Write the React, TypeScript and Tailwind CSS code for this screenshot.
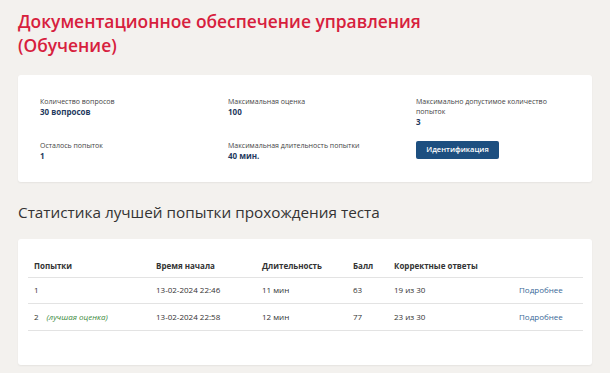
const rows = [
  { n: '1', best: false, start: '13-02-2024 22:46', dur: '11 мин', score: '63', correct: '19 из 30' },
  { n: '2', best: true, start: '13-02-2024 22:58', dur: '12 мин', score: '77', correct: '23 из 30' },
];

function Info({ label, value }: { label: string; value: string }) {
  return (
    <div className="leading-[10px]">
      <div className="text-[7px] text-[#444]">{label}</div>
      <div className="text-[8px] font-bold text-[#1f3a60]">{value}</div>
    </div>
  );
}

export default function App() {
  return (
    <div className="min-h-screen bg-[#f3f1ee] px-[18px] pt-[9px] pb-2 font-['Open_Sans',sans-serif]">
      <h1 className="text-[17.4px] leading-[24px] font-semibold text-[#d7203d]">
        Документационное обеспечение управления
        <br />
        (Обучение)
      </h1>

      <div className="mt-[18px] bg-white rounded-[3px] shadow-[0_1px_2px_rgba(0,0,0,0.06)] px-[22px] pt-[22px] pb-[21px]">
        <div className="grid grid-cols-[188px_188px_1fr] grid-rows-[44px_auto]">
          <Info label="Количество вопросов" value="30 вопросов" />
          <Info label="Максимальная оценка" value="100" />
          <div className="leading-[10px]">
            <div className="text-[7px] text-[#444] w-[135px]">Максимально допустимое количество попыток</div>
            <div className="text-[8px] font-bold text-[#1f3a60]">3</div>
          </div>
          <Info label="Осталось попыток" value="1" />
          <Info label="Максимальная длительность попытки" value="40 мин." />
          <div className="flex items-start">
            <button className="h-[18px] w-[83px] rounded-[2px] bg-[#1d4f80] text-[7.5px] font-semibold text-white">
              Идентификация
            </button>
          </div>
        </div>
      </div>

      <h2 className="mt-[20px] text-[15.3px] leading-[20px] text-[#333]">
        Статистика лучшей попытки прохождения теста
      </h2>

      <div className="mt-[17px] bg-white rounded-[3px] shadow-[0_1px_2px_rgba(0,0,0,0.06)] pl-[10px] pr-[9px] pt-[16px] pb-[34px]">
        <table className="w-full border-collapse text-[8px] text-[#333]">
          <thead>
            <tr className="h-[22px] border-b border-[#e3e3e3] text-left">
              <th className="w-[122px] pl-[6px] font-bold">Попытки</th>
              <th className="w-[106px] pl-[6px] font-bold">Время начала</th>
              <th className="w-[91px] pl-[6px] font-bold">Длительность</th>
              <th className="w-[41px] pl-[6px] font-bold">Балл</th>
              <th className="w-[125px] pl-[6px] font-bold">Корректные ответы</th>
              <th className="pl-[6px]"></th>
            </tr>
          </thead>
          <tbody>
            {rows.map((r) => (
              <tr key={r.n} className="h-[26.5px] border-b border-[#e3e3e3]">
                <td className="pl-[6px]">
                  {r.n}
                  {r.best && <span className="ml-[8px] italic text-[#3c8a3c]">(лучшая оценка)</span>}
                </td>
                <td className="pl-[6px]">{r.start}</td>
                <td className="pl-[6px]">{r.dur}</td>
                <td className="pl-[6px]">{r.score}</td>
                <td className="pl-[6px]">{r.correct}</td>
                <td className="pl-[6px] text-[#3a6898]">Подробнее</td>
              </tr>
            ))}
          </tbody>
        </table>
      </div>
    </div>
  );
}
